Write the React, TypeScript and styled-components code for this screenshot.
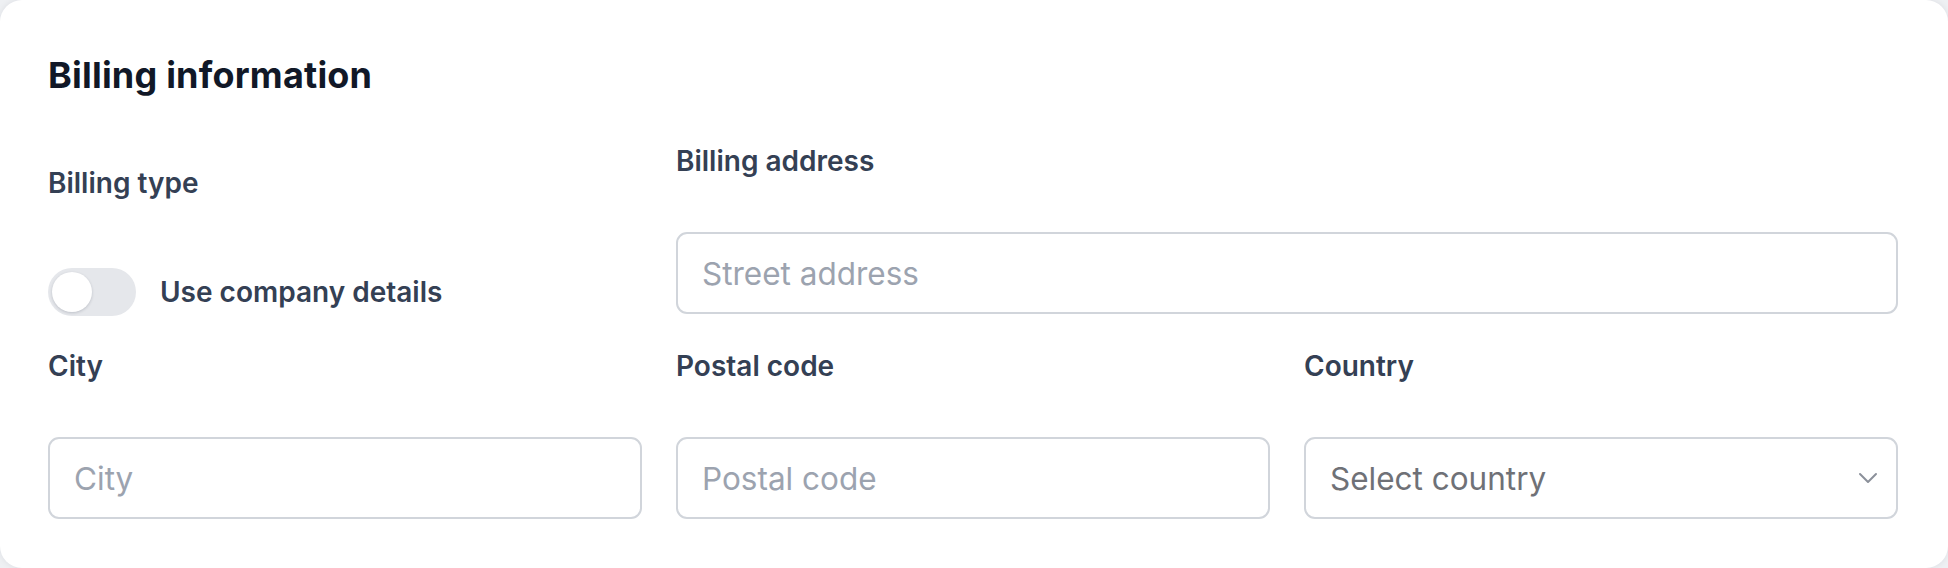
import * as React from 'react';
import styled, { createGlobalStyle } from 'styled-components';

const GlobalStyle = createGlobalStyle`
  html, body {
    margin: 0;
    padding: 0;
    background: #eef0f3;
  }
  body {
    font-family: Inter, "Noto Sans", "Liberation Sans", sans-serif;
    -webkit-font-smoothing: antialiased;
  }
  * {
    box-sizing: border-box;
  }
`;

const Card = styled.section`
  width: 1948px;
  height: 568px;
  background: #ffffff;
  border-radius: 22px;
  box-shadow: 0 0 6px rgba(15, 23, 42, 0.08);
  padding: 55px 50px 49px 48px;
`;

const Title = styled.h2`
  margin: 0;
  font-size: 36px;
  line-height: 40px;
  font-weight: 700;
  color: #111827;
  letter-spacing: 0.2px;
`;

const Grid = styled.div`
  margin-top: 49px;
  display: grid;
  grid-template-columns: repeat(3, 1fr);
  column-gap: 34px;
  row-gap: 35px;
`;

const Field = styled.div<{ $span?: number }>`
  display: flex;
  flex-direction: column;
  grid-column: span ${(p) => p.$span ?? 1};
`;

const TypeColumn = styled.div`
  display: flex;
  flex-direction: column;
  justify-content: space-between;
  padding-top: 22px;
  margin-bottom: -2px;
`;

const Label = styled.label`
  display: block;
  font-size: 28px;
  line-height: 34px;
  font-weight: 600;
  color: #344054;
`;

const FieldLabel = styled(Label)`
  margin-bottom: 54px;
`;

const TextInput = styled.input`
  width: 100%;
  height: 82px;
  padding: 0 24px;
  border: 2px solid #d1d5db;
  border-radius: 11px;
  background: #ffffff;
  font-family: inherit;
  font-size: 31.5px;
  color: #111827;
  outline: none;

  &::placeholder {
    color: #9ca3af;
  }
`;

const SelectWrap = styled.div`
  position: relative;
`;

const Select = styled.select`
  width: 100%;
  height: 82px;
  padding: 0 60px 0 24px;
  border: 2px solid #d1d5db;
  border-radius: 11px;
  background: #ffffff;
  font-family: inherit;
  font-size: 31.5px;
  color: #6f7177;
  appearance: none;
  outline: none;
`;

const Chevron = styled.svg`
  position: absolute;
  right: 20px;
  top: 50%;
  transform: translateY(-50%);
  pointer-events: none;
`;

const ToggleRow = styled.div`
  display: flex;
  align-items: center;
  gap: 24px;
`;

const Track = styled.button<{ $on: boolean }>`
  display: flex;
  align-items: center;
  justify-content: ${(p) => (p.$on ? 'flex-end' : 'flex-start')};
  width: 88px;
  height: 48px;
  padding: 0 4px;
  border: none;
  border-radius: 999px;
  background: ${(p) => (p.$on ? '#2563eb' : '#e5e7eb')};
  cursor: pointer;
`;

const Knob = styled.span`
  width: 40px;
  height: 40px;
  border-radius: 50%;
  background: #ffffff;
  box-shadow: 0 1px 3px rgba(15, 23, 42, 0.18);
`;

const ToggleText = styled.span`
  font-size: 28px;
  line-height: 34px;
  font-weight: 600;
  color: #344054;
`;

const App = () => {
  const [useCompany, setUseCompany] = React.useState(false);

  return (
    <>
      <GlobalStyle />
      <Card>
        <Title>Billing information</Title>
        <Grid>
          <TypeColumn>
            <Label>Billing type</Label>
            <ToggleRow>
              <Track
                type="button"
                role="switch"
                aria-checked={useCompany}
                $on={useCompany}
                onClick={() => setUseCompany(!useCompany)}
              >
                <Knob />
              </Track>
              <ToggleText>Use company details</ToggleText>
            </ToggleRow>
          </TypeColumn>

          <Field $span={2}>
            <FieldLabel htmlFor="street">Billing address</FieldLabel>
            <TextInput id="street" placeholder="Street address" />
          </Field>

          <Field>
            <FieldLabel htmlFor="city">City</FieldLabel>
            <TextInput id="city" placeholder="City" />
          </Field>

          <Field>
            <FieldLabel htmlFor="postal">Postal code</FieldLabel>
            <TextInput id="postal" placeholder="Postal code" />
          </Field>

          <Field>
            <FieldLabel htmlFor="country">Country</FieldLabel>
            <SelectWrap>
              <Select id="country" defaultValue="">
                <option value="" disabled>Select country</option>
                <option value="us">United States</option>
                <option value="gb">United Kingdom</option>
                <option value="de">Germany</option>
              </Select>
              <Chevron width="20" height="12" viewBox="0 0 20 12" fill="none">
                <polyline
                  points="2,2 10,10 18,2"
                  stroke="#8b909a"
                  strokeWidth="2"
                  strokeLinecap="round"
                  strokeLinejoin="round"
                />
              </Chevron>
            </SelectWrap>
          </Field>
        </Grid>
      </Card>
    </>
  );
};

export default App;
